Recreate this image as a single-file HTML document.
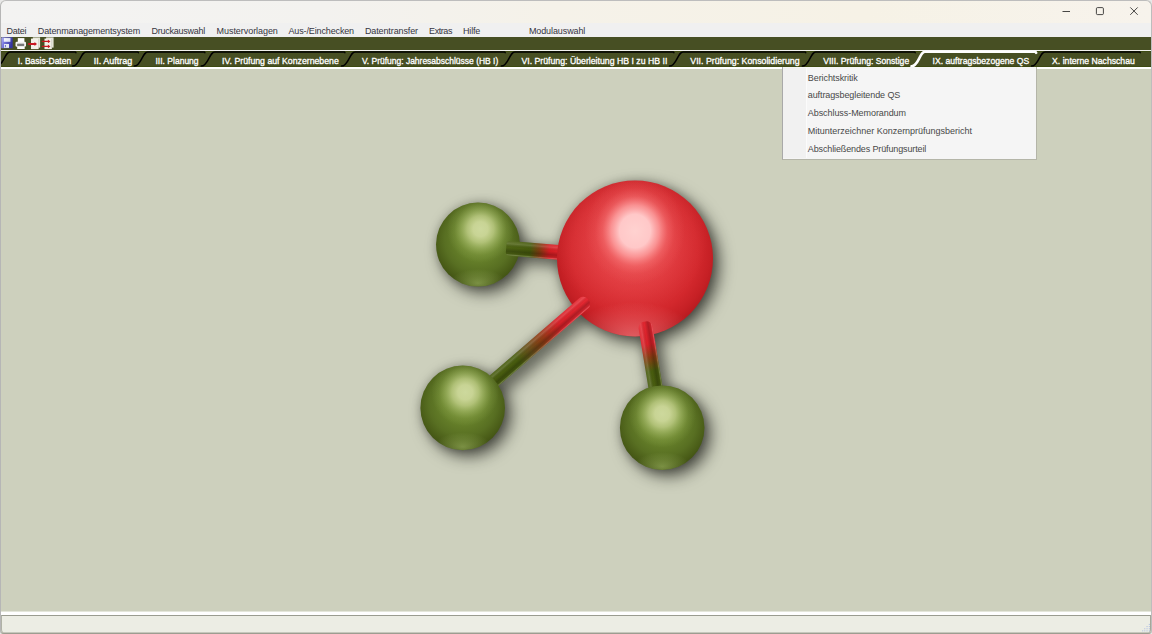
<!DOCTYPE html>
<html lang="de">
<head>
<meta charset="utf-8">
<title>Modulauswahl</title>
<style>
html,body{margin:0;padding:0;}
body{width:1152px;height:634px;overflow:hidden;position:relative;background:#e8e8e8;font-family:"Liberation Sans",sans-serif;}
#win{position:absolute;left:0;top:0;width:1152px;height:634px;box-sizing:border-box;overflow:hidden;border-radius:6px 6px 4px 4px;background:#cdd0bd;}
#frame{position:absolute;left:0;top:0;width:1152px;height:634px;box-sizing:border-box;border:1px solid #bdbdbd;border-left-color:#b6b6b6;border-bottom-color:#9c9d90;border-radius:6px 6px 4px 4px;pointer-events:none;z-index:50;}
#title{position:absolute;left:0;top:0;width:1152px;height:23px;background:linear-gradient(90deg,#f3f3f2 0%,#f3f2ef 28%,#f5f2e9 48%,#f6f2e6 75%,#f7f3ec 100%);}
#menubar{position:absolute;left:0;top:23px;width:1152px;height:14px;background:#f0f0f0;}
#menubar span{position:absolute;top:2.9px;font-size:9px;line-height:11px;color:#353540;white-space:nowrap;}
#toolbar{position:absolute;left:0;top:37px;width:1152px;height:13px;background:#474f23;}
#tabline{position:absolute;left:0;top:50px;width:1152px;height:1px;background:#f1f1ee;}
#tabs{position:absolute;left:0;top:51px;width:1152px;height:16px;background:#474f23;box-sizing:border-box;border-top:1px solid #3d4a12;border-bottom:1px solid #3d4a12;}
#tabwhite{position:absolute;left:0;top:67px;width:1152px;height:2px;background:#ffffff;}
#content{position:absolute;left:0;top:69px;width:1152px;height:543px;background:#cdd0bd;}
#stwhite{position:absolute;left:0;top:612px;width:1152px;height:3px;background:#ffffff;}
#status{position:absolute;left:1px;top:615px;width:1150px;height:18px;background:#ecede4;box-sizing:border-box;border-top:1px solid #9a9c90;border-left:1px solid #b0b2a6;border-right:1px solid #a6a79a;border-radius:0 0 4px 4px;}
#ovl{position:absolute;left:0;top:0;width:1152px;height:634px;z-index:10;}
#ovl text{font-family:"Liberation Sans",sans-serif;font-size:9.4px;font-weight:400;fill:#ffffff;stroke:#ffffff;stroke-width:0.32px;stroke-linejoin:round;}
#dd{position:absolute;left:782px;top:67px;width:254.5px;height:93px;box-sizing:border-box;background:#f5f5f5;border-left:1px solid #a9a9a9;border-right:1px solid #b4b5a8;border-bottom:1px solid #b4b5a8;z-index:20;}
#dd .gut{position:absolute;left:0;top:1px;width:22.5px;height:90px;background:#f1f1f1;border-right:1px solid #fbfbfb;}
#dd span{position:absolute;left:24.8px;font-size:9px;line-height:11px;color:#484848;white-space:nowrap;}
.cap{position:absolute;top:0;height:23px;width:35px;}
</style>
</head>
<body>
<div id="win">
<div id="title"></div>
<div id="menubar">
<span style="left:6.5px;letter-spacing:-0.224px">Datei</span>
<span style="left:37.8px;letter-spacing:-0.136px">Datenmanagementsystem</span>
<span style="left:151.5px;letter-spacing:-0.244px">Druckauswahl</span>
<span style="left:216.6px;letter-spacing:-0.059px">Mustervorlagen</span>
<span style="left:288.5px;letter-spacing:-0.137px">Aus-/Einchecken</span>
<span style="left:364.9px;letter-spacing:-0.110px">Datentransfer</span>
<span style="left:429.1px;letter-spacing:-0.437px">Extras</span>
<span style="left:463.0px;letter-spacing:-0.164px">Hilfe</span>
<span style="left:528.9px;letter-spacing:-0.096px">Modulauswahl</span>
</div>
<div id="toolbar"></div>
<div id="tabline"></div>
<div id="tabs"></div>
<div id="tabwhite"></div>
<div id="content"></div>
<div style="position:absolute;left:0;top:611px;width:1152px;height:1px;background:#e4e6da"></div>
<div id="stwhite"></div>
<div id="status"></div>
<div style="position:absolute;left:0;top:632px;width:1152px;height:1px;background:#c6c7bc"></div>
<svg id="ovl" width="1152" height="634" viewBox="0 0 1152 634">
<!--TABS-->
<path d="M-3.5,66.1 C-0.3,66.1 1.7,63.4 4.1,58.6 C6.5,54 7.5,51.9 10.1,51.9 L75.4,51.9 l0.5,0.8" fill="none" stroke="#000000" stroke-width="1.5" stroke-linecap="round" stroke-linejoin="round"/>
<path d="M72.5,66.1 C75.7,66.1 77.7,63.4 80.1,58.6 C82.5,54 83.5,51.9 86.1,51.9 L137.9,51.9 l0.5,0.8" fill="none" stroke="#000000" stroke-width="1.5" stroke-linecap="round" stroke-linejoin="round"/>
<path d="M134.2,66.1 C137.4,66.1 139.4,63.4 141.8,58.6 C144.2,54 145.2,51.9 147.8,51.9 L204.4,51.9 l0.5,0.8" fill="none" stroke="#000000" stroke-width="1.5" stroke-linecap="round" stroke-linejoin="round"/>
<path d="M201.2,66.1 C204.4,66.1 206.4,63.4 208.8,58.6 C211.2,54 212.2,51.9 214.8,51.9 L344.4,51.9 l0.5,0.8" fill="none" stroke="#000000" stroke-width="1.5" stroke-linecap="round" stroke-linejoin="round"/>
<path d="M341.5,66.1 C344.7,66.1 346.7,63.4 349.1,58.6 C351.5,54 352.5,51.9 355.1,51.9 L504.7,51.9 l0.5,0.8" fill="none" stroke="#000000" stroke-width="1.5" stroke-linecap="round" stroke-linejoin="round"/>
<path d="M501.3,66.1 C504.5,66.1 506.5,63.4 508.9,58.6 C511.3,54 512.3,51.9 514.9,51.9 L673.4,51.9 l0.5,0.8" fill="none" stroke="#000000" stroke-width="1.5" stroke-linecap="round" stroke-linejoin="round"/>
<path d="M669.5,66.1 C672.7,66.1 674.7,63.4 677.1,58.6 C679.5,54 680.5,51.9 683.1,51.9 L805.2,51.9 l0.5,0.8" fill="none" stroke="#000000" stroke-width="1.5" stroke-linecap="round" stroke-linejoin="round"/>
<path d="M802.3,66.1 C805.5,66.1 807.5,63.4 809.9,58.6 C812.3,54 813.3,51.9 815.9,51.9 L914.7,51.9 l0.5,0.8" fill="none" stroke="#000000" stroke-width="1.5" stroke-linecap="round" stroke-linejoin="round"/>
<path d="M1031.5,66.1 C1034.7,66.1 1036.7,63.4 1039.1,58.6 C1041.5,54 1042.5,51.9 1045.1,51.9 L1139.7,51.9 l0.5,0.8" fill="none" stroke="#000000" stroke-width="1.5" stroke-linecap="round" stroke-linejoin="round"/>
<path d="M911.5,66.3 C914.7,66.3 916.7,63.4 919.1,58.6 C921.5,54 922.5,51.8 925.1,51.8 L1035.4,51.8 l0.7,1.0" fill="none" stroke="#ffffff" stroke-width="2.6" stroke-linecap="round" stroke-linejoin="round"/>
<text x="17.8" y="63.6" textLength="53.4" lengthAdjust="spacingAndGlyphs">I. Basis-Daten</text>
<text x="93.8" y="63.6" textLength="38.5" lengthAdjust="spacingAndGlyphs">II. Auftrag</text>
<text x="155.5" y="63.6" textLength="43.1" lengthAdjust="spacingAndGlyphs">III. Planung</text>
<text x="222.1" y="63.6" textLength="116.7" lengthAdjust="spacingAndGlyphs">IV. Prüfung auf Konzernebene</text>
<text x="361.9" y="63.6" textLength="136.4" lengthAdjust="spacingAndGlyphs">V. Prüfung: Jahresabschlüsse (HB I)</text>
<text x="521.4" y="63.6" textLength="146.0" lengthAdjust="spacingAndGlyphs">VI. Prüfung: Überleitung HB I zu HB II</text>
<text x="690.3" y="63.6" textLength="109.3" lengthAdjust="spacingAndGlyphs">VII. Prüfung: Konsolidierung</text>
<text x="823.2" y="63.6" textLength="86.0" lengthAdjust="spacingAndGlyphs">VIII. Prüfung: Sonstige</text>
<text x="932.5" y="63.6" textLength="96.7" lengthAdjust="spacingAndGlyphs">IX. auftragsbezogene QS</text>
<text x="1052.1" y="63.6" textLength="82.7" lengthAdjust="spacingAndGlyphs">X. interne Nachschau</text>

<!--CAPTION BUTTONS-->
<g fill="none" stroke="#1b1b1b" stroke-width="0.8">
<path d="M1062.5,11.5H1070"/>
<rect x="1096.4" y="7.6" width="7" height="7" rx="1.1"/>
<path d="M1130.3,7.4l7.4,7.4M1137.7,7.4l-7.4,7.4"/>
</g>
<g id="grip"><rect x="1148.8" y="623.9" width="1.1" height="1.1" fill="#b6c4e2"/><rect x="1146.5" y="626.0" width="1.1" height="1.1" fill="#b6c4e2"/><rect x="1148.8" y="626.0" width="1.1" height="1.1" fill="#b6c4e2"/><rect x="1144.2" y="628.2" width="1.1" height="1.1" fill="#b6c4e2"/><rect x="1146.5" y="628.2" width="1.1" height="1.1" fill="#b6c4e2"/><rect x="1148.8" y="628.2" width="1.1" height="1.1" fill="#b6c4e2"/><rect x="1142.1" y="630.3" width="1.1" height="1.1" fill="#b6c4e2"/><rect x="1144.2" y="630.3" width="1.1" height="1.1" fill="#b6c4e2"/><rect x="1146.5" y="630.3" width="1.1" height="1.1" fill="#b6c4e2"/><rect x="1148.8" y="630.3" width="1.1" height="1.1" fill="#b6c4e2"/></g>
<defs>
<linearGradient id="fl" x1="0" y1="0" x2="1" y2="0.3">
<stop offset="0" stop-color="#b4b4ff"/><stop offset="0.35" stop-color="#7878dc"/><stop offset="1" stop-color="#3434a0"/>
</linearGradient>
<linearGradient id="pr" x1="0" y1="0" x2="0" y2="1">
<stop offset="0" stop-color="#ffffff"/><stop offset="0.3" stop-color="#f4f4f4"/><stop offset="0.45" stop-color="#5a5a5a"/><stop offset="0.75" stop-color="#6e6e6e"/><stop offset="0.9" stop-color="#e8e8e8"/><stop offset="1" stop-color="#ffffff"/>
</linearGradient>
<linearGradient id="prb" x1="0" y1="0" x2="0" y2="1"><stop offset="0" stop-color="#9c9c9c"/><stop offset="1" stop-color="#4a4a4a"/></linearGradient>
<linearGradient id="lb" x1="0" y1="0" x2="1" y2="1"><stop offset="0" stop-color="#ffffff"/><stop offset="1" stop-color="#d4daf0"/></linearGradient>
</defs>
<g id="icons">
<!-- floppy -->
<rect x="1.3" y="37.2" width="11.4" height="11.1" rx="0.6" fill="url(#fl)"/>
<rect x="3.8" y="38.1" width="6.6" height="3.7" fill="url(#lb)"/>
<rect x="4" y="44" width="5" height="3.9" fill="#e3e8f0"/>
<rect x="4.9" y="45" width="1.1" height="2.2" fill="#7474cc"/>
<!-- printer -->
<rect x="17.8" y="38.1" width="6.6" height="4.2" fill="#fdfdfd"/>
<rect x="15.5" y="41.8" width="10.5" height="5" rx="1.3" fill="#f2f2f2"/>
<rect x="17.1" y="43.5" width="7.1" height="2.2" rx="0.5" fill="url(#prb)"/>
<rect x="17.2" y="46.4" width="7.5" height="2.6" fill="#fdfdfd"/>
<!-- page + arrow -->
<rect x="32.8" y="37.4" width="7.3" height="10.2" fill="#e4e4d6"/>
<rect x="31" y="38.6" width="7.6" height="10.5" fill="#f1f1e7"/><rect x="38.2" y="39" width="0.5" height="9.6" fill="#c4c4b6"/>
<path d="M28.2,43.1H34.5V41.9L37,44L34.5,46.1V44.9H28.2Z" fill="#c81820"/>
<!-- page + two arrows -->
<rect x="46.1" y="37.4" width="7.5" height="10.2" fill="#e4e4d6"/>
<rect x="44.5" y="38.6" width="7.4" height="10.5" fill="#f1f1e7"/><rect x="51.5" y="39" width="0.5" height="9.6" fill="#c4c4b6"/>
<path d="M41.8,40.7H47.9V39.6L50.4,41.4L47.9,43.2V42.1H41.8Z" fill="#c81820"/>
<path d="M41.8,45.7H47.9V44.6L50.4,46.4L47.9,48.2V47.1H41.8Z" fill="#c81820"/>
</g>

<defs>
<filter id="sh" x="-30%" y="-30%" width="170%" height="170%" color-interpolation-filters="sRGB">
<feGaussianBlur in="SourceAlpha" stdDeviation="8"/>
<feOffset dx="6" dy="6"/>
<feColorMatrix type="matrix" values="0 0 0 0 0.04  0 0 0 0 0.045  0 0 0 0 0.03  0 0 0 0.68 0" result="s1"/>
<feGaussianBlur in="SourceAlpha" stdDeviation="4"/>
<feColorMatrix type="matrix" values="0 0 0 0 0.04  0 0 0 0 0.045  0 0 0 0 0.03  0 0 0 0.2 0" result="s2"/>
<feMerge><feMergeNode in="s1"/><feMergeNode in="s2"/></feMerge>
</filter>
<radialGradient id="gR" gradientUnits="userSpaceOnUse" cx="635" cy="252" r="84">
<stop offset="0" stop-color="#e23e42"/>
<stop offset="0.45" stop-color="#dc3237"/>
<stop offset="0.75" stop-color="#d3282d"/>
<stop offset="0.90" stop-color="#c62025"/>
<stop offset="1" stop-color="#b61a1f"/>
</radialGradient>
<radialGradient id="gRh" gradientUnits="userSpaceOnUse" cx="635" cy="231" r="50" gradientTransform="translate(635 231) scale(1 1.08) translate(-635 -231)">
<stop offset="0" stop-color="#ffd2d0" stop-opacity="1"/>
<stop offset="0.31" stop-color="#ffc8c8" stop-opacity="1"/>
<stop offset="0.48" stop-color="#ffa6a6" stop-opacity="0.8"/>
<stop offset="0.65" stop-color="#ff8a8a" stop-opacity="0.36"/>
<stop offset="0.8" stop-color="#ff8080" stop-opacity="0.12"/>
<stop offset="1" stop-color="#ff8080" stop-opacity="0"/>
</radialGradient>
<radialGradient id="gRw" gradientUnits="userSpaceOnUse" cx="630" cy="236" r="78">
<stop offset="0" stop-color="#ff7a7a" stop-opacity="0.3"/>
<stop offset="0.6" stop-color="#ff7a7a" stop-opacity="0.14"/>
<stop offset="1" stop-color="#ff7a7a" stop-opacity="0"/>
</radialGradient>
<radialGradient id="gRb" gradientUnits="userSpaceOnUse" cx="633" cy="338" r="64" gradientTransform="translate(633 338) scale(1 0.56) translate(-633 -338)">
<stop offset="0" stop-color="#ff8c90" stop-opacity="0.6"/>
<stop offset="0.45" stop-color="#ff8c90" stop-opacity="0.32"/>
<stop offset="1" stop-color="#ff8c90" stop-opacity="0"/>
</radialGradient>
<radialGradient id="gG" cx="0.5" cy="0.44" r="0.57">
<stop offset="0" stop-color="#728c32"/>
<stop offset="0.42" stop-color="#66802a"/>
<stop offset="0.70" stop-color="#586f22"/>
<stop offset="0.88" stop-color="#4a5d18"/>
<stop offset="1" stop-color="#3f5012"/>
</radialGradient>
<radialGradient id="gGh" cx="0.53" cy="0.315" r="0.40">
<stop offset="0" stop-color="#d0dba0" stop-opacity="0.97"/>
<stop offset="0.22" stop-color="#cdd89a" stop-opacity="0.95"/>
<stop offset="0.40" stop-color="#c2d08a" stop-opacity="0.8"/>
<stop offset="0.58" stop-color="#b0c474" stop-opacity="0.52"/>
<stop offset="0.78" stop-color="#a0b860" stop-opacity="0.2"/>
<stop offset="1" stop-color="#98b05c" stop-opacity="0"/>
</radialGradient>
<radialGradient id="gGh3" cx="0.50" cy="0.335" r="0.40">
<stop offset="0" stop-color="#d0dba0" stop-opacity="0.97"/>
<stop offset="0.22" stop-color="#cdd89a" stop-opacity="0.95"/>
<stop offset="0.40" stop-color="#c2d08a" stop-opacity="0.8"/>
<stop offset="0.58" stop-color="#b0c474" stop-opacity="0.52"/>
<stop offset="0.78" stop-color="#a0b860" stop-opacity="0.2"/>
<stop offset="1" stop-color="#98b05c" stop-opacity="0"/>
</radialGradient>
<radialGradient id="gGb" cx="0.5" cy="0.96" r="0.34" gradientTransform="translate(0.5 0.96) scale(1 0.5) translate(-0.5 -0.96)">
<stop offset="0" stop-color="#a4bc68" stop-opacity="0.55"/>
<stop offset="0.5" stop-color="#a4bc68" stop-opacity="0.26"/>
<stop offset="1" stop-color="#a4bc68" stop-opacity="0"/>
</radialGradient>
<linearGradient id="b1" gradientUnits="userSpaceOnUse" x1="0" y1="0" x2="60" y2="0">
<stop offset="0" stop-color="#4e6414"/><stop offset="0.40" stop-color="#465a0c"/><stop offset="0.55" stop-color="#7c3c10"/><stop offset="0.72" stop-color="#d41c22"/><stop offset="1" stop-color="#e0262c"/>
</linearGradient>
<linearGradient id="b2" gradientUnits="userSpaceOnUse" x1="0" y1="0" x2="166" y2="0">
<stop offset="0" stop-color="#4a5e12"/><stop offset="0.44" stop-color="#485c0e"/><stop offset="0.53" stop-color="#66501a"/><stop offset="0.63" stop-color="#8e3c14"/><stop offset="0.77" stop-color="#d82028"/><stop offset="1" stop-color="#e62832"/>
</linearGradient>
<linearGradient id="b3" gradientUnits="userSpaceOnUse" x1="0" y1="0" x2="113" y2="0">
<stop offset="0" stop-color="#4a5e12"/><stop offset="0.51" stop-color="#485c0e"/><stop offset="0.63" stop-color="#863e12"/><stop offset="0.75" stop-color="#d82028"/><stop offset="1" stop-color="#e62832"/>
</linearGradient>
<linearGradient id="cs" x1="0" y1="0" x2="0" y2="1">
<stop offset="0" stop-color="#fff" stop-opacity="0.06"/><stop offset="0.2" stop-color="#fff" stop-opacity="0.16"/><stop offset="0.45" stop-color="#000" stop-opacity="0.0"/><stop offset="0.7" stop-color="#000" stop-opacity="0.22"/><stop offset="0.86" stop-color="#000" stop-opacity="0.12"/><stop offset="0.95" stop-color="#fff" stop-opacity="0.2"/><stop offset="1" stop-color="#fff" stop-opacity="0.1"/>
</linearGradient>
</defs>
<g id="mol">
<!-- shadows -->
<g filter="url(#sh)">
<circle cx="478" cy="244.6" r="42"/>
<circle cx="462.7" cy="407.9" r="42.3"/>
<circle cx="662.2" cy="427.7" r="42.3"/>
<circle cx="635" cy="258.5" r="78"/>
<g transform="translate(506.2 248.1) rotate(4.73)"><rect x="0" y="-7" width="80" height="14" rx="3.5"/></g>
<g transform="translate(462.7 407.9) rotate(-40.85)"><rect x="0" y="-6.8" width="165.8" height="13.6" rx="6"/></g>
<g transform="translate(662.2 427.7) rotate(-99.4)"><rect x="0" y="-7.1" width="107.6" height="14.2" rx="6.2"/></g>
</g>
<!-- green1 (behind bond1) -->
<circle cx="478" cy="244.6" r="42" fill="url(#gG)"/><circle cx="478" cy="244.6" r="42" fill="url(#gGb)"/><circle cx="478" cy="244.6" r="42" fill="url(#gGh)"/>
<!-- bond1 over green1, behind red -->
<g transform="translate(506.2 248.1) rotate(4.73)"><rect x="0" y="-7.5" width="80" height="14.8" rx="3.5" fill="url(#b1)"/><rect x="0" y="-7.5" width="80" height="14.8" rx="3.5" fill="url(#cs)"/></g>
<!-- bond2, bond3 behind greens, over red: draw red first -->
<circle cx="635" cy="258.5" r="78" fill="url(#gR)"/><circle cx="635" cy="258.5" r="78" fill="url(#gRb)"/><circle cx="635" cy="258.5" r="78" fill="url(#gRw)"/><circle cx="635" cy="258.5" r="78" fill="url(#gRh)"/>
<g transform="translate(462.7 407.9) rotate(-40.85)"><rect x="0" y="-6.8" width="165.8" height="13.6" rx="6" fill="url(#b2)"/><rect x="0" y="-6.8" width="165.8" height="13.6" rx="6" fill="url(#cs)"/></g>
<g transform="translate(662.2 427.7) rotate(-99.4)"><rect x="0" y="-7.1" width="107.6" height="14.2" rx="6.2" fill="url(#b3)"/><rect x="0" y="-7.1" width="107.6" height="14.2" rx="6.2" fill="url(#cs)"/></g>
<circle cx="462.7" cy="407.9" r="42.3" fill="url(#gG)"/><circle cx="462.7" cy="407.9" r="42.3" fill="url(#gGb)"/><circle cx="462.7" cy="407.9" r="42.3" fill="url(#gGh)"/>
<circle cx="662.2" cy="427.7" r="42.3" fill="url(#gG)"/><circle cx="662.2" cy="427.7" r="42.3" fill="url(#gGb)"/><circle cx="662.2" cy="427.7" r="42.3" fill="url(#gGh3)"/>
</g>

</svg>
<div id="dd">
<div class="gut"></div>
<span style="top:5.5px;letter-spacing:-0.080px">Berichtskritik</span>
<span style="top:23.3px;letter-spacing:-0.099px">auftragsbegleitende QS</span>
<span style="top:41px;letter-spacing:-0.067px">Abschluss-Memorandum</span>
<span style="top:58.8px;letter-spacing:-0.010px">Mitunterzeichner Konzernprüfungsbericht</span>
<span style="top:76.5px;letter-spacing:-0.127px">Abschließendes Prüfungsurteil</span>
</div>
</div>
<div id="frame"></div>
</body>
</html>
